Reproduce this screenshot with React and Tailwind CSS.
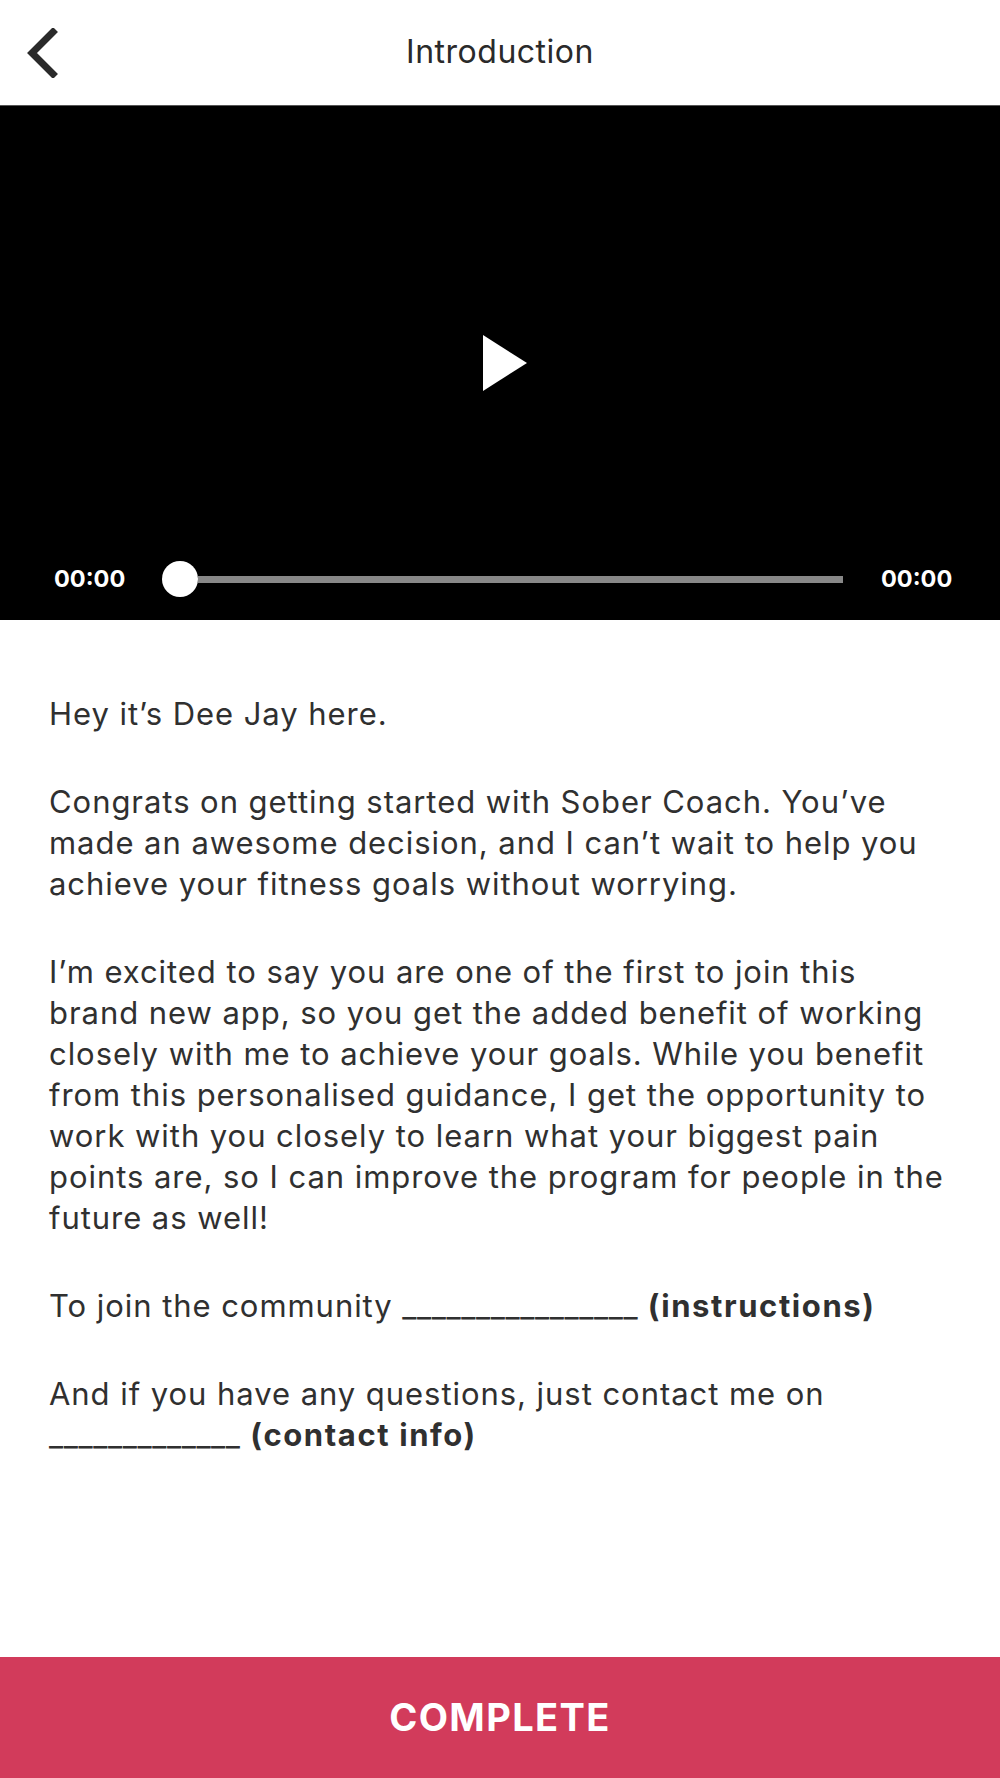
import React from "react";

export default function App() {
  const font = { fontFamily: "Inter, 'Noto Sans', sans-serif" };
  return (
    <div className="w-[1000px] h-[1778px] flex flex-col bg-white text-[#303030]" style={font}>
      <header className="relative h-[106px] shrink-0 flex items-center justify-center border-b border-[#555555]">
        <svg className="absolute left-[24px] top-[28px]" width="36" height="50" viewBox="0 0 36 50">
          <polyline points="29,4 8,25 29,46" fill="none" stroke="#2a2a2a" strokeWidth="7" strokeLinecap="square" strokeLinejoin="miter" />
        </svg>
        <h1 className="text-[32px] font-normal text-[#2a2a2a] tracking-[0.5px] mt-[-2px]">Introduction</h1>
      </header>

      <section className="h-[514px] shrink-0 bg-black flex flex-col">
        <div className="flex-1 flex items-center justify-center">
          <svg width="44" height="56" viewBox="0 0 44 56" className="ml-[10px] mt-[82px]">
            <polygon points="0,0 44,28 0,56" fill="#ffffff" />
          </svg>
        </div>
        <div className="h-[82px] flex items-center pl-[54px] pr-[51px]">
          <span className="text-white font-bold text-[23.5px] w-[70px]">00:00</span>
          <div className="flex-1 flex items-center ml-[38px] mr-[38px]">
            <div className="w-[36px] h-[36px] rounded-full bg-white shrink-0" />
            <div className="flex-1 h-[7px] bg-[#888888]" />
          </div>
          <span className="text-white font-bold text-[23.5px] w-[68px] text-right">00:00</span>
        </div>
      </section>

      <main className="flex-1 pl-[49px] pr-[10px] pt-[73px] text-[31px] leading-[41px] tracking-[0.95px]">
        <p>Hey it’s Dee Jay here.</p>
        <p className="mt-[47px]">
          Congrats on getting started with Sober Coach. You’ve<br />
          made an awesome decision, and I can’t wait to help you<br />
          achieve your fitness goals without worrying.
        </p>
        <p className="mt-[47px]">
          I’m excited to say you are one of the first to join this<br />
          brand new app, so you get the added benefit of working<br />
          closely with me to achieve your goals. While you benefit<br />
          from this personalised guidance, I get the opportunity to<br />
          work with you closely to learn what your biggest pain<br />
          points are, so I can improve the program for people in the<br />
          future as well!
        </p>
        <p className="mt-[47px]">
          To join the community <span className="tracking-[0.6px]">________________</span> <b className="font-bold tracking-[1.6px]">(instructions)</b>
        </p>
        <p className="mt-[47px]">
          And if you have any questions, just contact me on<br />
          <span className="tracking-[0.6px]">_____________</span> <b className="font-bold tracking-[1.6px]">(contact info)</b>
        </p>
      </main>

      <button className="h-[121px] shrink-0 w-full bg-[#d23b5b] text-white text-[38px] font-bold tracking-[1.4px] flex items-center justify-center">
        COMPLETE
      </button>
    </div>
  );
}
